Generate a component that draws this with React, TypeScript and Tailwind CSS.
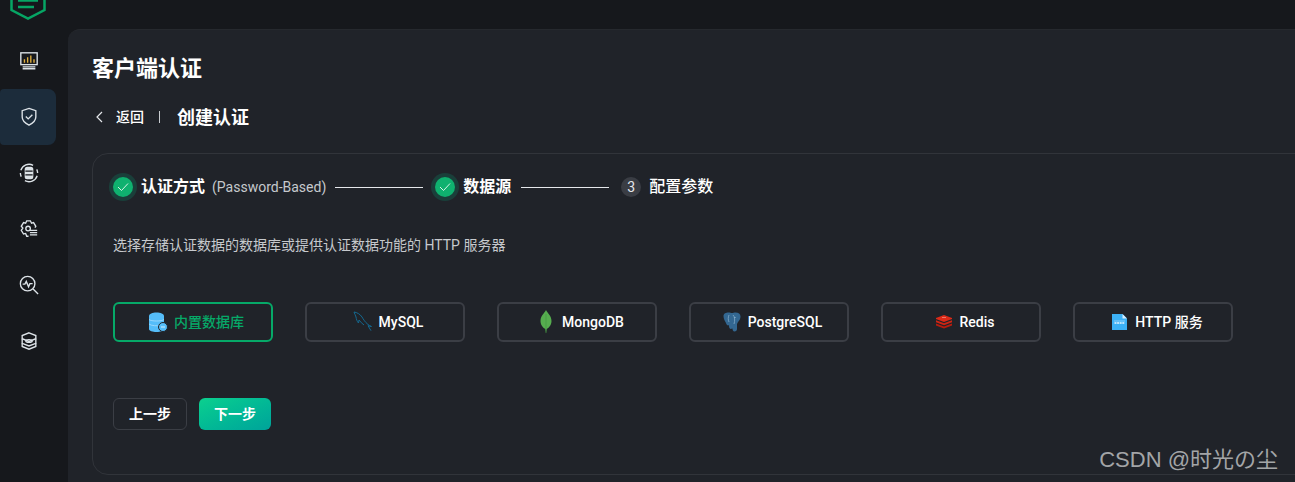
const navIcons = [
  // monitor with bars
  <g key="a"><rect x="2" y="2" width="18" height="13" /><path d="M6 13V9M9.500 13V7M13 13V5M16.500 13v-4" stroke="#e0b040" /><path d="M4 17.500h14M4 19.500h14" /></g>,
  // shield check
  <g key="b"><path d="M11 1.500l7.500 2.500v7c0 4-3.200 6.800-7.500 9-4.300-2.200-7.500-5-7.500-9V4z" /><path d="M7.500 10.500l2.600 2.600 4.600-4.600" /></g>,
  // db in arrows ring
  <g key="c"><path d="M2 8A9.500 9.500 0 0 1 15.500 2.500M20 14A9.500 9.500 0 0 1 6.500 19.500M1.500 11a9.500 9.500 0 0 0 1 4M20.500 11a9.500 9.500 0 0 0-1-4" /><rect x="7" y="5" width="8" height="12" rx="2" fill="#dde3e8" /><path d="M7 9h8M7 13h8" stroke="#16181c" /></g>,
  // gear with lines
  <g key="d"><path d="M17.500 9.500L18.500 8l-2.500-4-2.200.600L12.500 2h-4L7.300 4.600 5 4 2.500 8l1.700 2-1.700 2.500 2.500 4 2.300-.6L8.500 19h2" /><circle cx="10" cy="10.500" r="2.500" /><path d="M12 12.500h8M12 15h8M12 17.500h8" /></g>,
  // search pulse
  <g key="e"><circle cx="9.500" cy="9.500" r="8" /><path d="M15.500 15.500l5.500 5.500" /><path d="M4 10h2.500l1.500-3 2.500 6 1.500-3.500H15" /></g>,
  // layers
  <g key="f"><path d="M11 2l7.500 3v3.500L11 11.500 3.500 8.500V5z" /><path d="M3.500 8.500v5L11 16.500l7.500-3v-5" /><path d="M3.500 13.500v3.500L11 20l7.500-3v-3.500" /><ellipse cx="11" cy="11" rx="3.500" ry="1.500" /></g>,
];

const sources = [
  { name: "内置数据库", icon: "db", active: true },
  { name: "MySQL", icon: "mysql" },
  { name: "MongoDB", icon: "mongo" },
  { name: "PostgreSQL", icon: "pg" },
  { name: "Redis", icon: "redis" },
  { name: "HTTP 服务", icon: "http" },
];

function SourceIcon({ type }: { type: string }) {
  if (type === "db")
    return (
      <svg width="20" height="20" viewBox="0 0 20 20">
        <path d="M1 4c0-2 3.500-3.500 7.500-3.500S16 2 16 4v13c0 1.800-3.500 3-7.500 3S1 18.800 1 17z" fill="#55bdf9" />
        <path d="M1 7.500c2 2 13 2 15 0M1 12c2 2 9 2 11 1.500" stroke="#a8dcfb" strokeWidth="0.800" fill="none" />
        <circle cx="15" cy="15" r="4.500" fill="#55bdf9" stroke="#202329" />
        <path d="M13 15h4" stroke="#d8f0ff" />
      </svg>
    );
  if (type === "mysql")
    return (
      <svg width="20" height="22" viewBox="0 0 20 22" fill="none" stroke="#14688f" strokeWidth="1">
        <path d="M1 1c3 .5 6 2 8 5 1.500 2.500 3 5 6 7.500 1 .8 2.500 1.500 3.500 2-1.500 0-2.500-.3-3.500-.8l3 5" />
        <path d="M1 1c.5 2 1.500 3 2 5 .3 2 1 4.500 2.500 6l.5-3c1.500 2 3 3.500 5 5" />
      </svg>
    );
  if (type === "mongo")
    return (
      <svg width="12" height="24" viewBox="0 0 12 24">
        <path d="M6 0c1 2.500 5.500 5.500 5.500 11 0 4.500-3 7-4.800 8L6 23.500 5.300 19C3.500 18 .500 15.500.500 11 .500 5.500 5 2.500 6 0z" fill="#56ad4f" />
        <path d="M6 4v19" stroke="#3f8f3c" strokeWidth="0.500" />
      </svg>
    );
  if (type === "pg")
    return (
      <svg width="18" height="20" viewBox="0 0 18 20">
        <path d="M.500 4C.500 1.500 3 .500 5.500.500c1.500 0 2.500.5 3.500.5s2-.5 3.500-.5c3 0 5 1.500 5 4 0 2-1 4-2.500 5.500L14 12v5c0 1.500-1 2.500-2.500 2.500S9.500 18 9.500 16.500l-2 .5c-1.500-.5-1.500-3-1.500-4-1 1-2.500 0-3-2C2 9 .500 7 .500 4z" fill="#336791" />
        <path d="M6 3c-1 2-1 5 0 7M10 3c2 1.500 2 6 1 9M11 5.500h1.800" stroke="#8fb4d0" strokeWidth="0.700" fill="none" />
      </svg>
    );
  if (type === "redis")
    return (
      <svg width="16" height="14" viewBox="0 0 16 14">
        <path d="M0 10.500l8 3 8-3V8.500L8 11.500 0 8.500z" fill="#b81c0e" />
        <path d="M0 7.200l8 3 8-3V5.200L8 8.200 0 5.200z" fill="#cf2413" />
        <path d="M8 0l8 3v1L8 7 0 4V3z" fill="#dc2a18" />
        <path d="M6 2.500h4" stroke="#f4a79f" strokeWidth="0.600" />
      </svg>
    );
  return (
    <svg width="15" height="16" viewBox="0 0 15 16">
      <path d="M0 0h10.500L15 4.500V16H0z" fill="#3cb1f5" />
      <path d="M10.500 0L15 4.500h-4.500z" fill="#d5eefd" />
      <path d="M2 7h11" stroke="#d5eefd" strokeWidth="0.500" />
      <path d="M2.500 9h10" stroke="#e6f5fe" strokeWidth="1.400" strokeDasharray="2 0.600" />
    </svg>
  );
}

function StepCheck() {
  return (
    <span className="flex w-7 h-7 items-center justify-center rounded-full bg-[#1a3f3a] shrink-0">
      <span className="flex w-5 h-5 items-center justify-center rounded-full bg-[#0fb16f]">
        <svg width="12" height="10" viewBox="0 0 12 10" fill="none" stroke="#d7f3e6" strokeWidth="1">
          <path d="M1 5l3.500 3.500L11 1.500" />
        </svg>
      </span>
    </span>
  );
}

export default function App() {
  return (
    <div
      className="relative flex w-[1295px] h-[482px] overflow-hidden bg-[#16181c] text-white"
      style={{ fontFamily: 'Roboto, "Noto Sans CJK SC", sans-serif' }}
    >
      {/* 侧边栏 */}
      <aside className="w-[68px] shrink-0 flex flex-col">
        <div className="h-[32px] -mt-[12px] pl-[10px] mb-[13px]">
          <svg width="36" height="32" viewBox="0 0 36 32" fill="none" stroke="#06a564" strokeWidth="2.500">
            <path d="M1.500 0v22L18 30.500 34.500 22V0" />
            <path d="M8 12.500h20" />
            <path d="M8 19h16" />
          </svg>
        </div>
        {navIcons.map((icon, i) => (
          <div
            key={i}
            className={`w-[56px] h-[56px] flex items-center justify-center pl-px pb-px rounded-r-lg rounded-l-sm ${i === 1 ? "bg-[#1c2c3b]" : ""}`}
          >
            <svg width="20" height="20" viewBox="0 0 22 22" fill="none" stroke="#dde3e8" strokeWidth="1.500">
              {icon}
            </svg>
          </div>
        ))}
      </aside>

      {/* 主内容 */}
      <main className="mt-[29px] w-[1400px] shrink-0 rounded-tl-xl bg-[#202329] border-t border-[#26292e] pl-6 pt-6">
        <h1 className="text-[22px] leading-[30px] font-bold">客户端认证</h1>
        <div className="flex items-center mt-[21px] h-[24px]">
          <svg width="8" height="12" viewBox="0 0 8 12" fill="none" stroke="#e5e7eb" strokeWidth="1.200" className="ml-[3px]">
            <path d="M7 1L2 6l5 5" />
          </svg>
          <span className="ml-[13px] text-[14px] font-medium">返回</span>
          <span className="ml-[15px] w-px h-[12px] bg-[#c8ccd0]" />
          <span className="ml-[17px] text-[18px] font-bold">创建认证</span>
        </div>

        <section className="mt-[24px] w-[1300px] h-[322px] rounded-2xl border border-[#31343a] pl-5 pt-5">
          <div className="flex items-center h-[28px] -ml-[4px] -mt-px text-[16px]">
            <StepCheck />
            <span className="ml-[4px] font-bold">认证方式</span>
            <span className="ml-[7px] text-[14px] text-[#c6c9cd]">(Password-Based)</span>
            <span className="ml-[9px] w-[88px] h-px bg-[#e5e7eb]" />
            <span className="ml-[8px]"><StepCheck /></span>
            <span className="ml-[4px] font-bold">数据源</span>
            <span className="ml-[10px] w-[88px] h-px bg-[#e5e7eb]" />
            <span className="ml-[12px] flex w-5 h-5 items-center justify-center rounded-full bg-[#3a3d44] text-[14px] text-[#e5e7eb]">3</span>
            <span className="ml-[8px] font-medium">配置参数</span>
          </div>

          <p className="mt-[34px] text-[14px] leading-5 text-[#c6c9cd]">
            选择存储认证数据的数据库或提供认证数据功能的 HTTP 服务器
          </p>

          <div className="flex gap-8 mt-[47px]">
            {sources.map((s) => (
              <div
                key={s.name}
                className={`w-[160px] h-[40px] flex items-center justify-center gap-[6px] pl-[6px] rounded-md border-2 text-[14px] font-medium ${
                  s.active ? "border-[#06a968] text-[#06a968]" : "border-[#3b3e45] text-white"
                }`}
              >
                <span className="flex w-5 justify-center shrink-0"><SourceIcon type={s.icon} /></span>
                <span>{s.name}</span>
              </div>
            ))}
          </div>

          <div className="flex gap-3 mt-[56px]">
            <button className="w-[74px] h-[32px] rounded-md border border-[#3b3e45] text-[14px] font-bold">上一步</button>
            <button className="w-[72px] h-[32px] rounded-md bg-gradient-to-br from-[#0cd08e] to-[#00a39a] text-[14px] font-bold">下一步</button>
          </div>
        </section>
      </main>

      {/* 水印 */}
      <div
        className="absolute right-[17px] top-[444px] text-[22px] leading-[32px] text-[#a3a5a7] whitespace-nowrap"
        style={{ fontFamily: '"Liberation Sans", "Noto Sans CJK JP", sans-serif' }}
      >
        CSDN @时光の尘
      </div>
    </div>
  );
}
